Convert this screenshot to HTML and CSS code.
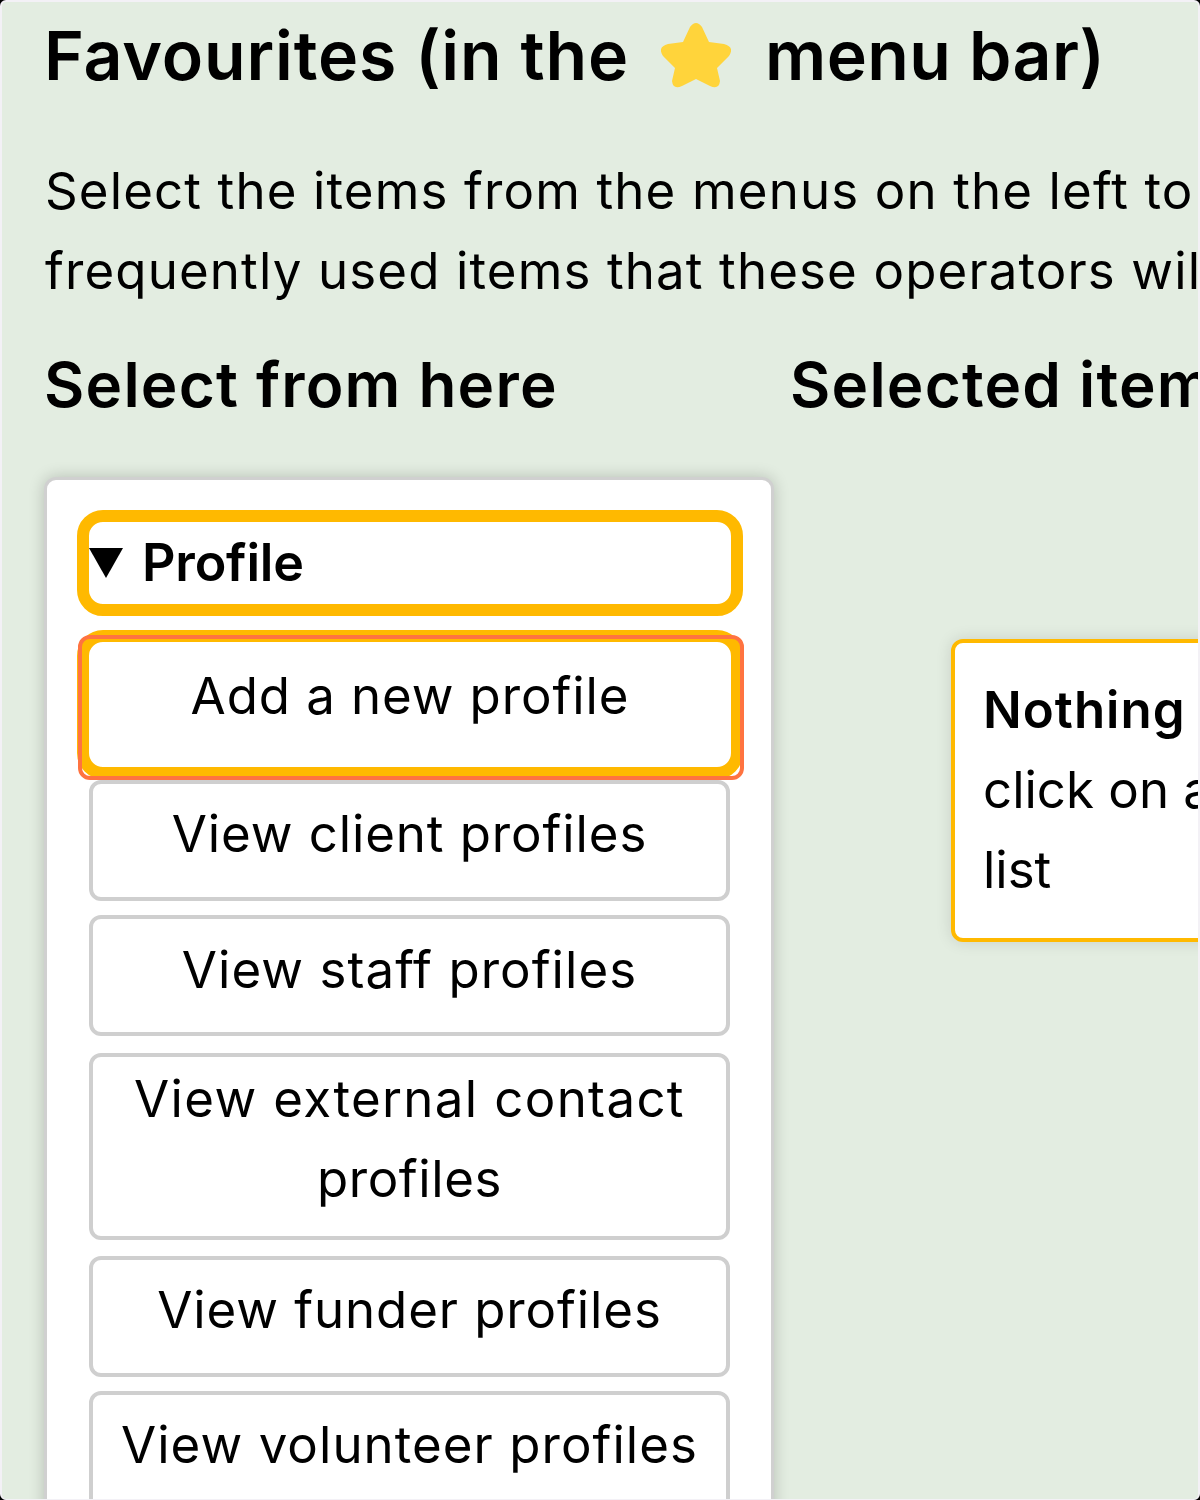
FILE: index.html
```
<!DOCTYPE html>
<html lang="en">
<head>
<meta charset="utf-8">
<title>Favourites</title>
<link rel="stylesheet" href="styles.css">
</head>
<body>
<main class="frame">
  <h1 class="title"><span class="title-a">Favourites (in the</span><svg class="star" viewBox="0 0 70 66"><path d="M29 5Q35-3 41 5L48 20L63 22Q74 25 68 34L56 46L59 59Q58 68 49 64L35 57L21 64Q12 68 11 59L14 46L2 34Q-4 25 7 22L22 20Z"/></svg><span class="title-b">menu bar)</span></h1>
  <p class="intro">Select the items from the menus on the left to<br>frequently used items that these operators wil</p>
  <div class="columns">
    <section class="source">
      <h2>Select from here</h2>
      <div class="panel">
        <div class="summary"><svg class="marker" viewBox="0 0 34 30"><path d="M0 0H34L17 30Z"/></svg><span>Profile</span></div>
        <div class="item active">Add a new profile<i class="highlight"></i></div>
        <div class="item">View client profiles</div>
        <div class="item staff">View staff profiles</div>
        <div class="item tall"><span class="external">View external contact</span><br>profiles</div>
        <div class="item">View funder profiles</div>
        <div class="item last">View volunteer profiles</div>
      </div>
    </section>
    <section class="selected">
      <h2>Selected item</h2>
      <div class="notice"><b class="nothing">Nothing</b><br>click on a<br>list</div>
    </section>
  </div>
</main>
</body>
</html>
```
FILE: styles.css
```
* { box-sizing: border-box; }
html { background: #000; }
body { margin: 0; width: 1200px; height: 1500px; overflow: hidden; font-family: Inter, "Liberation Sans", sans-serif; color: #000; }
.frame { width: 1200px; height: 1500px; border: 2px solid #f3f1f6; border-bottom-width: 1px; border-radius: 6px; background: #e3ede1; overflow: hidden; white-space: nowrap; padding-left: 42px; }
h1, h2, p { margin: 0; }
.title { display: flex; align-items: flex-start; height: 149px; padding-top: 13px; font-size: 68px; line-height: 80px; font-weight: 600; }
.title-a { letter-spacing: .85px; }
.title-b { letter-spacing: .45px; }
.star { width: 70px; height: 66px; margin: 7px 34px 0 32px; fill: #ffd43b; }
.intro { padding-left: 1px; font-size: 51px; line-height: 80px; font-weight: 400; letter-spacing: 1.13px; }
.columns { display: flex; }
.source { width: 745px; }
h2 { height: 166px; padding-top: 34px; font-size: 62px; line-height: 80px; font-weight: 600; letter-spacing: 1.2px; }
.panel { width: 730px; height: 1100px; border: 3px solid #d0d0d0; border-radius: 12px; background: #fff; box-shadow: 0 0 16px rgba(0,0,0,.2); padding: 30px; }
.summary { display: flex; width: 666px; height: 106px; border: 12px solid #ffb900; border-radius: 26px; font-size: 52px; font-weight: 600; line-height: 82px; letter-spacing: -.2px; }
.marker { width: 34px; height: 30px; margin: 26px 19px 0 0; }
.item { width: 641px; height: 121px; margin: 0 0 14px 12px; border: 4px solid #cfcfcf; border-radius: 12px; font-size: 51px; font-weight: 400; line-height: 80px; letter-spacing: .9px; padding-top: 10px; text-align: center; }
.active { position: relative; width: 666px; height: 149px; margin: 14px 0 1px; border: 12px solid #ffb900; border-radius: 26px; padding-top: 14px; }
.highlight { position: absolute; left: -11px; top: -7px; width: 666px; height: 145px; border: 4px solid #ff7340; border-radius: 12px; }
.staff { letter-spacing: 1.05px; padding-top: 11px; }
.tall { height: 187px; margin-top: 17px; margin-bottom: 16px; padding-top: 2px; letter-spacing: .6px; }
.external { letter-spacing: 1.35px; }
.last { height: 140px; letter-spacing: 1.05px; }
.selected { margin-left: 1px; }
.selected h2 { padding-left: 15px; }
.notice { width: 400px; height: 303px; margin: 162px 0 0 176px; border: 4px solid #ffb900; border-radius: 12px; background: #fff; box-shadow: 0 0 16px rgba(0,0,0,.12); font-size: 51px; line-height: 80px; font-weight: 400; padding: 27px 28px; }
.nothing { font-weight: 600; letter-spacing: 1px; }
```
